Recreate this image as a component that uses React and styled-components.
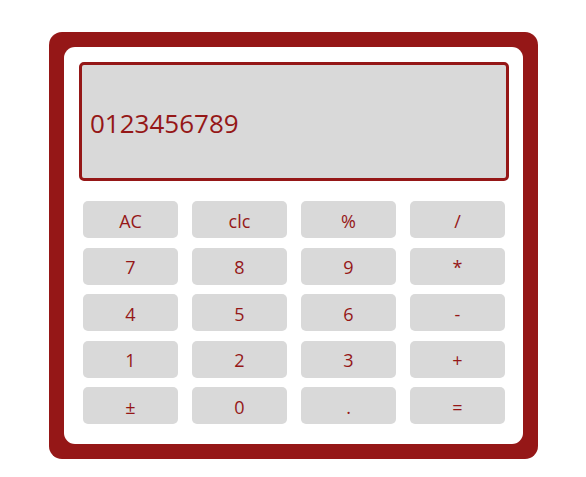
import React from 'react';
import styled, { createGlobalStyle } from 'styled-components';

const GlobalStyle = createGlobalStyle`
  body {
    margin: 0;
    background: #ffffff;
    font-family: "Open Sans", "Noto Sans", sans-serif;
  }
`;

const Page = styled.div`
  padding: 32px 0 0 49px;
`;

const Case = styled.div`
  box-sizing: border-box;
  width: 489px;
  height: 427px;
  padding: 15px;
  background: #951717;
  border-radius: 13px;
`;

const Face = styled.div`
  box-sizing: border-box;
  height: 100%;
  padding: 15px 14px 20px 15px;
  background: #ffffff;
  border-radius: 11px;
  display: flex;
  flex-direction: column;
  gap: 20px;
`;

const Screen = styled.div`
  box-sizing: border-box;
  height: 120px;
  border: 3px solid #951717;
  border-radius: 5px;
  background: #d9d9d9;
  display: flex;
  align-items: center;
  padding: 2px 8px 0;
  color: #951717;
  font-size: 26px;
`;

const Keys = styled.div`
  display: grid;
  grid-template-columns: repeat(4, 95px);
  grid-auto-rows: 37px;
  column-gap: 14px;
  row-gap: 9.5px;
  padding: 0 4px;
`;

const Key = styled.button`
  border: none;
  border-radius: 5px;
  background: #d9d9d9;
  color: #951717;
  font-family: inherit;
  font-size: 18px;
  padding: 2px 0 0;
  cursor: pointer;
`;

const keys = ['AC', 'clc', '%', '/', '7', '8', '9', '*', '4', '5', '6', '-', '1', '2', '3', '+', '±', '0', '.', '='];

const App = () => (
  <>
    <GlobalStyle />
    <Page>
      <Case>
        <Face>
          <Screen>0123456789</Screen>
          <Keys>
            {keys.map((k) => (
              <Key key={k}>{k}</Key>
            ))}
          </Keys>
        </Face>
      </Case>
    </Page>
  </>
);

export default App;
